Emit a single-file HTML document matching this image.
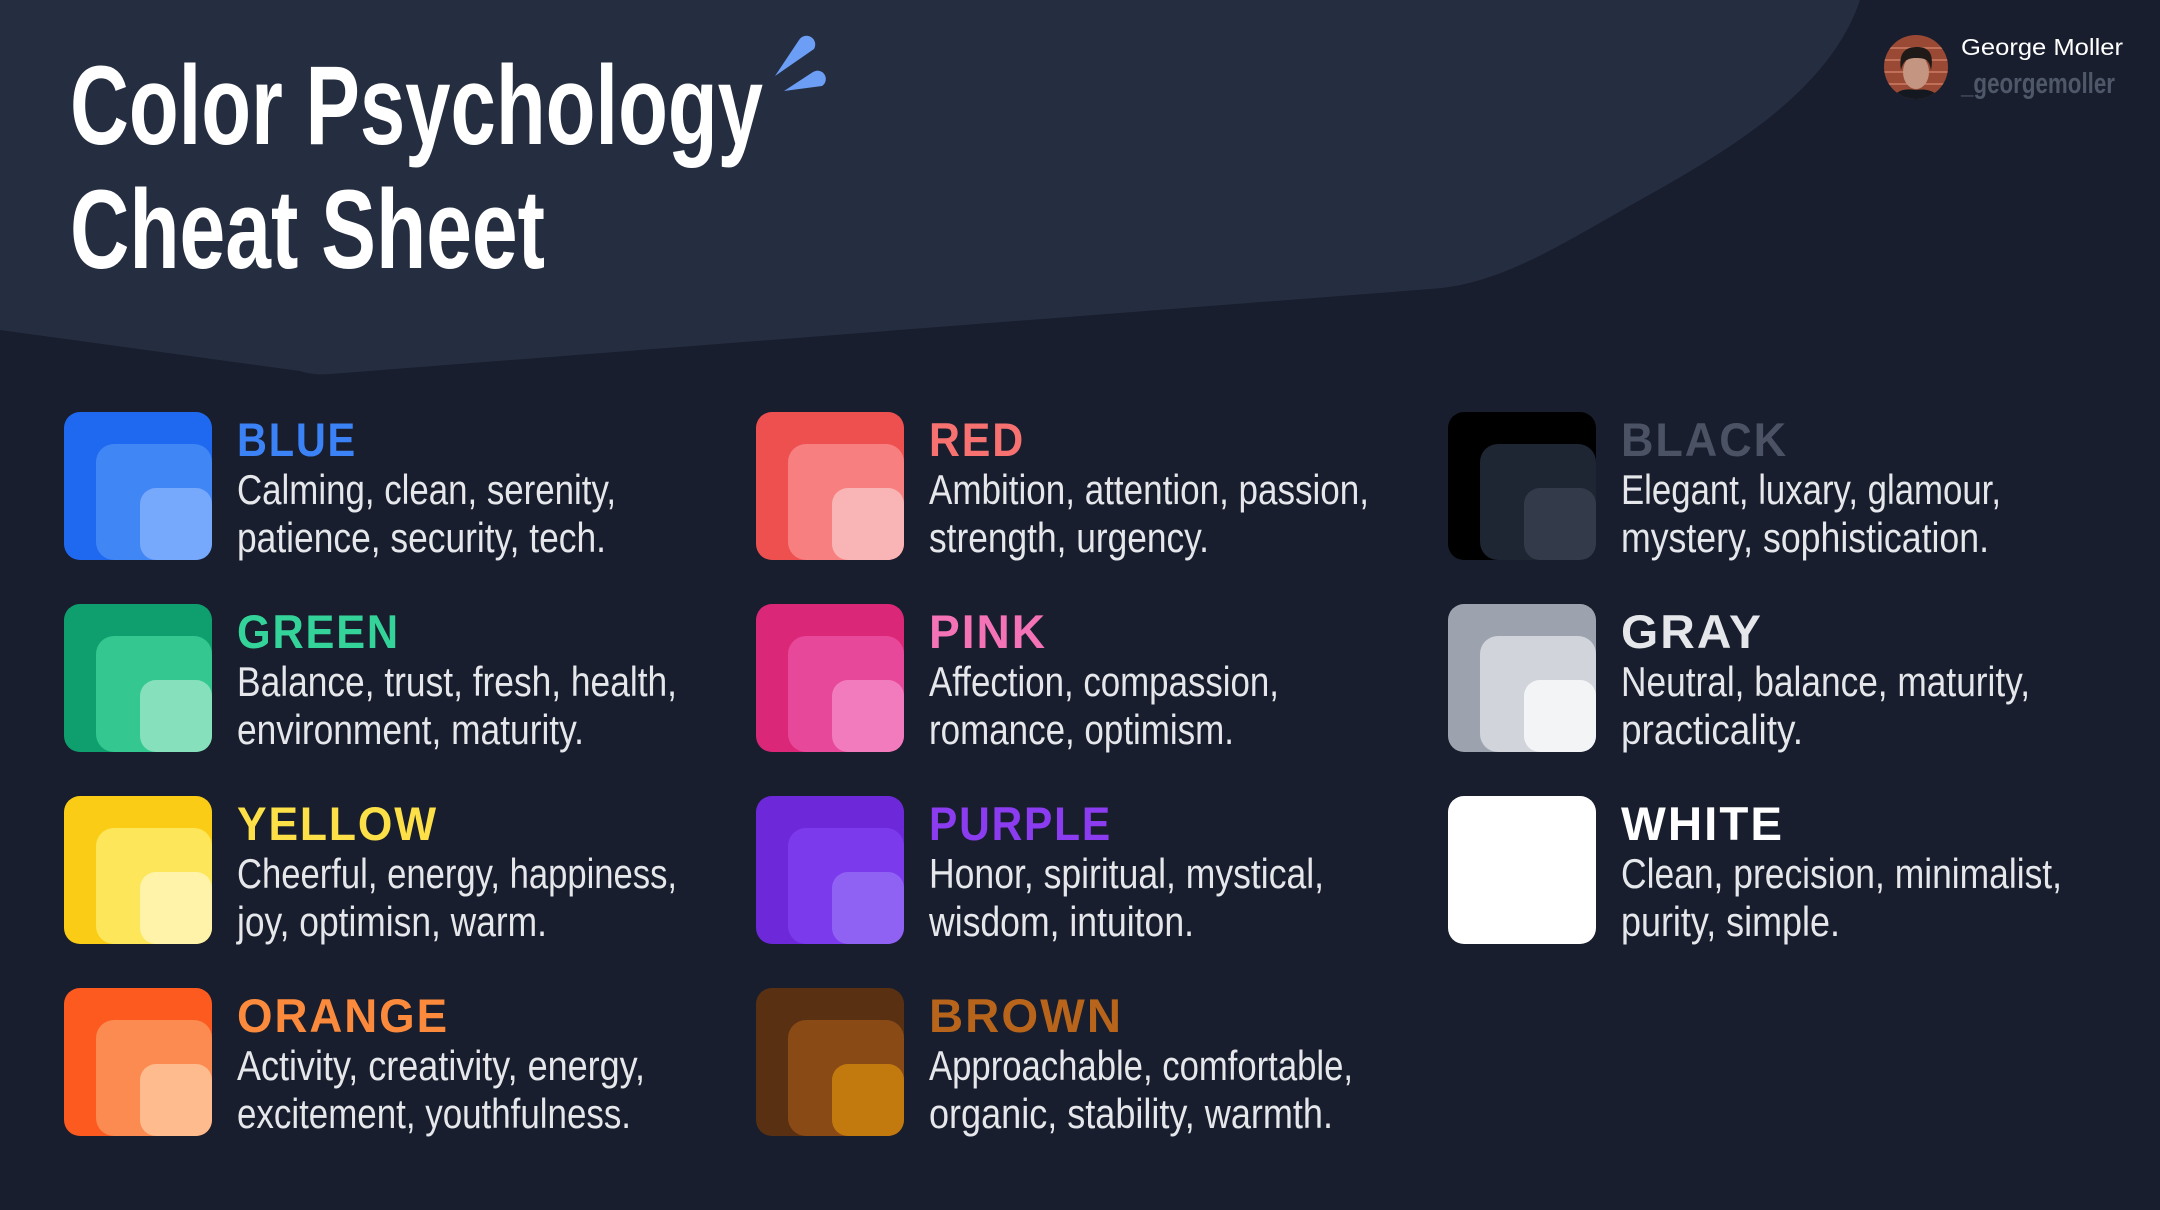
<!DOCTYPE html>
<html><head><meta charset="utf-8"><style>
html,body{margin:0;padding:0;background:#181e2d;}
svg{display:block}
.t{font-family:"Liberation Sans",sans-serif;font-weight:bold;font-size:47px;letter-spacing:2px}
.d{font-family:"Liberation Sans Narrow","Liberation Sans",sans-serif;font-size:42px;fill:#e5e7eb}
.h{font-family:"Liberation Sans Narrow","Liberation Sans",sans-serif;font-weight:bold;font-size:112px;fill:#fff}
</style></head><body>
<svg width="2160" height="1210" viewBox="0 0 2160 1210" xmlns="http://www.w3.org/2000/svg">
<rect width="2160" height="1210" fill="#181e2d"/>
<path d="M0,0 L1860,0 C1830,90 1730,150 1640,200 C1560,245 1500,285 1430,289 L330,374 C318,375 310,374 300,371 L0,330 Z" fill="#252e40"/>
<text class="h" x="70" y="144" textLength="693" lengthAdjust="spacingAndGlyphs">Color Psychology</text>
<text class="h" x="70" y="268" textLength="475" lengthAdjust="spacingAndGlyphs">Cheat Sheet</text>
<path d="M775,76 L799,40 A8.5,8.5 0 0 1 814,49 Z" fill="#6c9ef5"/>
<path d="M784,91 L813,72 A7.5,7.5 0 0 1 822,86 Z" fill="#6c9ef5"/>
<!-- avatar -->
<clipPath id="av"><circle cx="1916" cy="67" r="32"/></clipPath>
<g clip-path="url(#av)">
<rect x="1880" y="30" width="80" height="80" fill="#9a4a34"/>
<path d="M1884,48 H1950 M1884,60 H1950 M1884,72 H1950 M1884,84 H1950" stroke="#c07058" stroke-width="2"/>
<ellipse cx="1916" cy="72" rx="13" ry="17" fill="#c49580"/>
<path d="M1901,70 C1898,52 1906,47 1917,47 C1930,47 1934,55 1931,70 C1929,60 1926,58 1916,58 C1906,58 1903,62 1901,70 Z" fill="#1f1a18"/>
<path d="M1890,102 C1895,90 1905,88 1916,90 C1928,88 1938,92 1942,102 Z" fill="#141820"/>
</g>
<text x="1961" y="55" font-family="Liberation Sans,sans-serif" font-size="23" fill="#fff" textLength="162" lengthAdjust="spacingAndGlyphs">George Moller</text>
<text x="1961" y="93" font-family="Liberation Sans Narrow,Liberation Sans,sans-serif" font-weight="bold" font-size="29" fill="#4f5869" textLength="154" lengthAdjust="spacingAndGlyphs">_georgemoller</text>

<!-- cards -->
<g transform="translate(64,412)">
<rect width="148" height="148" rx="16" fill="#1f69f0"/><rect x="32" y="32" width="116" height="116" rx="18" fill="#4086f5"/><rect x="76" y="76" width="72" height="72" rx="16" fill="#76a8fb"/>
<text class="t" x="173" y="44" fill="#3b82f6" textLength="120" lengthAdjust="spacingAndGlyphs">BLUE</text>
<text class="d" x="173" y="92" textLength="379" lengthAdjust="spacingAndGlyphs">Calming, clean, serenity,</text>
<text class="d" x="173" y="140" textLength="369" lengthAdjust="spacingAndGlyphs">patience, security, tech.</text>
</g>
<g transform="translate(64,604)">
<rect width="148" height="148" rx="16" fill="#0f9f6e"/><rect x="32" y="32" width="116" height="116" rx="18" fill="#34c78f"/><rect x="76" y="76" width="72" height="72" rx="16" fill="#86e0bb"/>
<text class="t" x="173" y="44" fill="#34d399" textLength="163" lengthAdjust="spacingAndGlyphs">GREEN</text>
<text class="d" x="173" y="92" textLength="440" lengthAdjust="spacingAndGlyphs">Balance, trust, fresh, health,</text>
<text class="d" x="173" y="140" textLength="347" lengthAdjust="spacingAndGlyphs">environment, maturity.</text>
</g>
<g transform="translate(64,796)">
<rect width="148" height="148" rx="16" fill="#facc15"/><rect x="32" y="32" width="116" height="116" rx="18" fill="#fde65a"/><rect x="76" y="76" width="72" height="72" rx="16" fill="#fef3a8"/>
<text class="t" x="173" y="44" fill="#fde047" textLength="201" lengthAdjust="spacingAndGlyphs">YELLOW</text>
<text class="d" x="173" y="92" textLength="440" lengthAdjust="spacingAndGlyphs">Cheerful, energy, happiness,</text>
<text class="d" x="173" y="140" textLength="310" lengthAdjust="spacingAndGlyphs">joy, optimisn, warm.</text>
</g>
<g transform="translate(64,988)">
<rect width="148" height="148" rx="16" fill="#fc5a1f"/><rect x="32" y="32" width="116" height="116" rx="18" fill="#fb8b50"/><rect x="76" y="76" width="72" height="72" rx="16" fill="#fdbb8e"/>
<text class="t" x="173" y="44" fill="#fb8a3c" textLength="212" lengthAdjust="spacingAndGlyphs">ORANGE</text>
<text class="d" x="173" y="92" textLength="408" lengthAdjust="spacingAndGlyphs">Activity, creativity, energy,</text>
<text class="d" x="173" y="140" textLength="394" lengthAdjust="spacingAndGlyphs">excitement, youthfulness.</text>
</g>

<g transform="translate(756,412)">
<rect width="148" height="148" rx="16" fill="#ee5050"/><rect x="32" y="32" width="116" height="116" rx="18" fill="#f77f7f"/><rect x="76" y="76" width="72" height="72" rx="16" fill="#f9b5b5"/>
<text class="t" x="173" y="44" fill="#f87171" textLength="96" lengthAdjust="spacingAndGlyphs">RED</text>
<text class="d" x="173" y="92" textLength="440" lengthAdjust="spacingAndGlyphs">Ambition, attention, passion,</text>
<text class="d" x="173" y="140" textLength="280" lengthAdjust="spacingAndGlyphs">strength, urgency.</text>
</g>
<g transform="translate(756,604)">
<rect width="148" height="148" rx="16" fill="#db2777"/><rect x="32" y="32" width="116" height="116" rx="18" fill="#e8489a"/><rect x="76" y="76" width="72" height="72" rx="16" fill="#f27bbd"/>
<text class="t" x="173" y="44" fill="#f472b6" textLength="118" lengthAdjust="spacingAndGlyphs">PINK</text>
<text class="d" x="173" y="92" textLength="350" lengthAdjust="spacingAndGlyphs">Affection, compassion,</text>
<text class="d" x="173" y="140" textLength="305" lengthAdjust="spacingAndGlyphs">romance, optimism.</text>
</g>
<g transform="translate(756,796)">
<rect width="148" height="148" rx="16" fill="#6d28d9"/><rect x="32" y="32" width="116" height="116" rx="18" fill="#7c3aed"/><rect x="76" y="76" width="72" height="72" rx="16" fill="#8f62f4"/>
<text class="t" x="173" y="44" fill="#8b3cf0" textLength="183" lengthAdjust="spacingAndGlyphs">PURPLE</text>
<text class="d" x="173" y="92" textLength="395" lengthAdjust="spacingAndGlyphs">Honor, spiritual, mystical,</text>
<text class="d" x="173" y="140" textLength="265" lengthAdjust="spacingAndGlyphs">wisdom, intuiton.</text>
</g>
<g transform="translate(756,988)">
<rect width="148" height="148" rx="16" fill="#5a3012"/><rect x="32" y="32" width="116" height="116" rx="18" fill="#8a4a15"/><rect x="76" y="76" width="72" height="72" rx="16" fill="#c27a0e"/>
<text class="t" x="173" y="44" fill="#b8651b" textLength="194" lengthAdjust="spacingAndGlyphs">BROWN</text>
<text class="d" x="173" y="92" textLength="424" lengthAdjust="spacingAndGlyphs">Approachable, comfortable,</text>
<text class="d" x="173" y="140" textLength="404" lengthAdjust="spacingAndGlyphs">organic, stability, warmth.</text>
</g>

<g transform="translate(1448,412)">
<rect width="148" height="148" rx="16" fill="#000"/><rect x="32" y="32" width="116" height="116" rx="18" fill="#1e2533"/><rect x="76" y="76" width="72" height="72" rx="16" fill="#333b4b"/>
<text class="t" x="173" y="44" fill="#4b5263" textLength="167" lengthAdjust="spacingAndGlyphs">BLACK</text>
<text class="d" x="173" y="92" textLength="380" lengthAdjust="spacingAndGlyphs">Elegant, luxary, glamour,</text>
<text class="d" x="173" y="140" textLength="368" lengthAdjust="spacingAndGlyphs">mystery, sophistication.</text>
</g>
<g transform="translate(1448,604)">
<rect width="148" height="148" rx="16" fill="#9ca3af"/><rect x="32" y="32" width="116" height="116" rx="18" fill="#d1d5db"/><rect x="76" y="76" width="72" height="72" rx="16" fill="#f3f4f6"/>
<text class="t" x="173" y="44" fill="#e5e7eb" textLength="142" lengthAdjust="spacingAndGlyphs">GRAY</text>
<text class="d" x="173" y="92" textLength="409" lengthAdjust="spacingAndGlyphs">Neutral, balance, maturity,</text>
<text class="d" x="173" y="140" textLength="182" lengthAdjust="spacingAndGlyphs">practicality.</text>
</g>
<g transform="translate(1448,796)">
<rect width="148" height="148" rx="16" fill="#fff"/>
<text class="t" x="173" y="44" fill="#fff" textLength="163" lengthAdjust="spacingAndGlyphs">WHITE</text>
<text class="d" x="173" y="92" textLength="441" lengthAdjust="spacingAndGlyphs">Clean, precision, minimalist,</text>
<text class="d" x="173" y="140" textLength="219" lengthAdjust="spacingAndGlyphs">purity, simple.</text>
</g>
</svg>
</body></html>
